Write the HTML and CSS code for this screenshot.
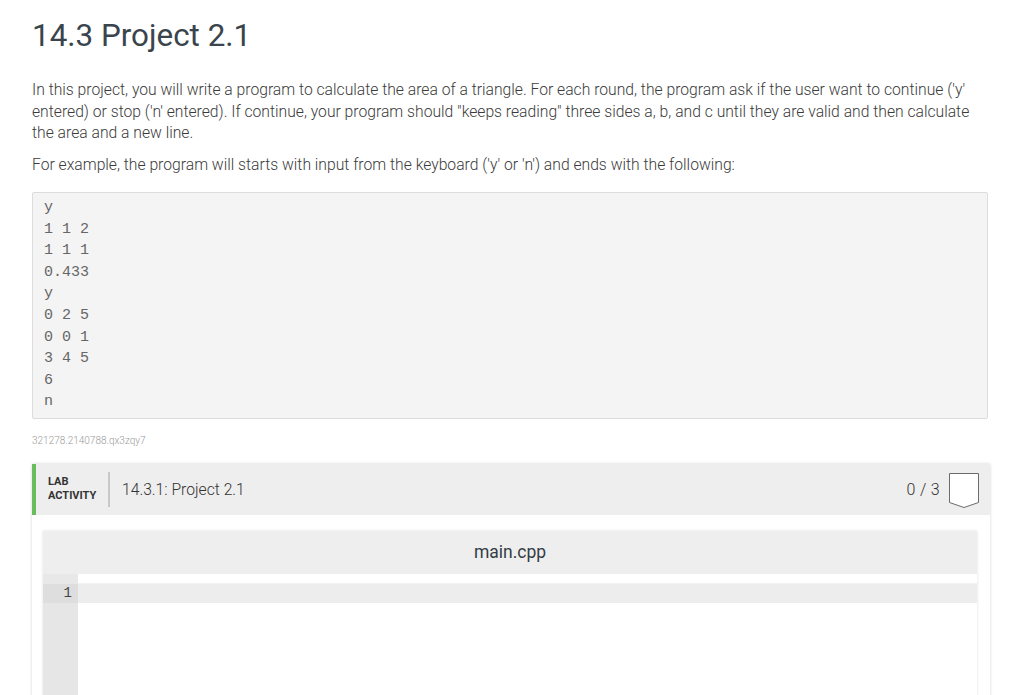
FILE: index.html
```html
<!DOCTYPE html>
<html>
<head>
<meta charset="utf-8">
<link rel="stylesheet" href="styles.css">
</head>
<body>
<div class="page">
  <h1 class="title">14.3 Project 2.1</h1>
  <p class="para">In this project, you will write a program to calculate the area of a triangle. For each round, the program ask if the user want to continue ('y' entered) or stop ('n' entered). If continue, your program should "keeps reading" three sides a, b, and c until they are valid and then calculate the area and a new line.</p>
  <p class="para">For example, the program will starts with input from the keyboard ('y' or 'n') and ends with the following:</p>
  <pre class="code">y
1 1 2
1 1 1
0.433
y
0 2 5
0 0 1
3 4 5
6
n</pre>
  <div class="ident">321278.2140788.qx3zqy7</div>
  <div class="lab">
    <div class="lab-head">
      <div class="lab-label">LAB<br>ACTIVITY</div>
      <div class="lab-sep"></div>
      <div class="lab-title">14.3.1: Project 2.1</div>
      <div class="lab-score">0 / 3</div>
      <svg class="lab-badge" width="32" height="38" viewBox="0 0 32 38">
        <path d="M1.5 1.5 H30.5 V30.5 L16 35.5 L1.5 30.5 Z" fill="#fff" stroke="#6b6b6b" stroke-width="1"/>
      </svg>
    </div>
    <div class="lab-body">
      <div class="editor">
        <div class="editor-head">main.cpp</div>
        <div class="editor-main">
          <div class="gutter"><div class="gutter-top"></div><div class="lnum">1</div></div>
          <div class="lines"><div class="line-top"></div><div class="line-active"></div></div>
        </div>
      </div>
    </div>
  </div>
</div>
</body>
</html>
```
FILE: styles.css
```css
html, body {
  margin: 0;
  padding: 0;
  background: #fff;
}
.page {
  padding: 0 36px 0 32px;
  font-family: Roboto, "Liberation Sans", sans-serif;
}
.title {
  margin: 0;
  padding-top: 16px;
  font-size: 31.4px;
  font-weight: 400;
  line-height: 40px;
  color: #3a444d;
}
.para {
  margin: 0;
  font-size: 15.7px;
  font-weight: 300;
  line-height: 21.5px;
  color: #3b3b3b;
}
.title + .para {
  margin-top: 23px;
}
.para + .para {
  margin-top: 10px;
}
.code {
  margin: 17px 0 0 0;
  background: #f4f4f4;
  border: 1px solid #dcdcdc;
  border-radius: 2px;
  padding: 4px 11px 5px;
  font-family: "Liberation Mono", "DejaVu Sans Mono", monospace;
  font-size: 15px;
  line-height: 21.6px;
  color: #666;
}
.ident {
  margin-top: 15px;
  font-size: 10px;
  font-weight: 300;
  color: #9a9a9a;
  line-height: 14px;
}
.lab {
  margin-top: 16px;
  margin-right: -2px;
  box-shadow: 0 0 3px rgba(0,0,0,0.18);
  background: #fff;
  height: 260px;
}
.lab-head {
  display: flex;
  align-items: center;
  height: 51px;
  background: #eeeeee;
  border-left: 4px solid #6bbb5f;
  padding-left: 12px;
  padding-right: 10px;
}
.lab-label {
  font-size: 11px;
  font-weight: 700;
  line-height: 14px;
  color: #333;
  width: 60px;
}
.lab-sep {
  width: 2px;
  height: 35px;
  background: #c8c8c8;
  margin-right: 12px;
}
.lab-title {
  font-size: 15.7px;
  font-weight: 300;
  color: #333;
  flex: 1;
}
.lab-score {
  font-size: 16px;
  font-weight: 300;
  color: #333;
  letter-spacing: 0.3px;
  margin-right: 8px;
}
.lab-badge {
  display: block;
  margin-top: 4px;
}
.lab-body {
  padding: 16px 13px 0 11px;
}
.editor {
  box-shadow: 0 0 3px rgba(0,0,0,0.12);
}
.editor-head {
  height: 43px;
  background: #eeeeee;
  text-align: center;
  font-size: 17.5px;
  line-height: 43px;
  color: #333d46;
}
.editor-main {
  display: flex;
  height: 200px;
}
.gutter {
  width: 35px;
  background: #e6e6e6;
}
.gutter-top {
  height: 10px;
  background: #e8e8e8;
}
.lnum {
  height: 19px;
  line-height: 19px;
  text-align: right;
  padding-right: 6px;
  font-family: "Liberation Mono", "DejaVu Sans Mono", monospace;
  font-size: 14px;
  color: #444;
  background: #dedede;
}
.lines {
  flex: 1;
  background: #fff;
}
.line-top {
  height: 10px;
  border-bottom: 1px solid #f2f2f2;
  box-sizing: border-box;
}
.line-active {
  height: 19px;
  background: #ededed;
}
```
